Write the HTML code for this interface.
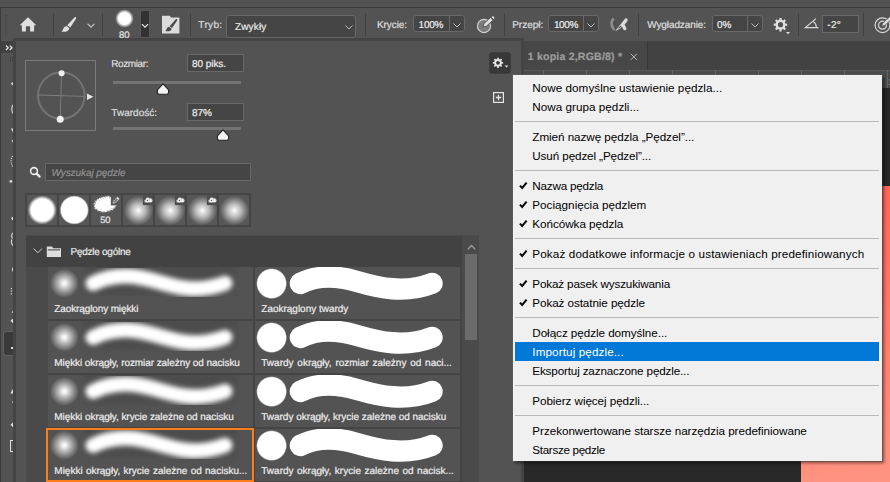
<!DOCTYPE html>
<html><head><meta charset="utf-8"><title>Pędzle</title>
<style>
*{box-sizing:border-box;margin:0;padding:0}
html,body{width:890px;height:482px;overflow:hidden;background:#535353}
body{position:relative;font-family:"Liberation Sans",sans-serif;font-size:11px;color:#dcdcdc}
.a{position:absolute}
.t{position:absolute;white-space:nowrap}
.sep{position:absolute;top:13px;width:1px;height:23px;background:#404040}
.inp{position:absolute;background:#454545;border:1px solid #686868}
</style></head><body>
<div class="a" style="left:0;top:7px;width:890px;height:1px;background:#3b3b3b"></div>
<div class="a" style="left:0;top:8px;width:1px;height:474px;background:#3b3b3b"></div>
<div class="a" style="left:1px;top:41px;width:12px;height:12px;background:#424242"></div>
<svg class="a" style="left:5px;top:45px" width="9" height="6" viewBox="0 0 9 6"><path d="M1 0.6 L3.2 2.8 L1 5 M4.8 0.6 L7 2.8 L4.8 5" fill="none" stroke="#e8e8e8" stroke-width="1.3"/></svg>
<div class="a" style="left:524px;top:41px;width:366px;height:29px;background:#424242"></div>
<div class="a" style="left:524px;top:41px;width:124px;height:29px;background:#474747;border-right:1px solid #383838"></div>
<div class="a" style="left:524px;top:70px;width:366px;height:18px;background:#4b4b4b;border-top:1px solid #585858"></div>
<span class="t" style="left:888.4px;top:77px;font-size:9px;line-height:10px;color:#a8a8a8;text-rendering:geometricPrecision;-webkit-text-stroke:0.22px">1</span>
<div class="a" style="left:543px;top:70px;width:1px;height:18px;background:#646464"></div>
<div class="a" style="left:586px;top:70px;width:1px;height:18px;background:#646464"></div>
<div class="a" style="left:629px;top:70px;width:1px;height:18px;background:#646464"></div>
<div class="a" style="left:672px;top:70px;width:1px;height:18px;background:#646464"></div>
<div class="a" style="left:715px;top:70px;width:1px;height:18px;background:#646464"></div>
<div class="a" style="left:758px;top:70px;width:1px;height:18px;background:#646464"></div>
<div class="a" style="left:801px;top:70px;width:1px;height:18px;background:#646464"></div>
<div class="a" style="left:844px;top:70px;width:1px;height:18px;background:#646464"></div>
<div class="a" style="left:887px;top:70px;width:1px;height:18px;background:#646464"></div>
<div class="a" style="left:524px;top:88px;width:366px;height:394px;background:#282828"></div>
<div class="a" style="left:801px;top:186px;width:89px;height:296px;background:linear-gradient(172deg,#ff6454 0,#ff7c6a 50%,#ff9482 100%)"></div>
<span class="t" style="left:527.8px;top:51px;font-size:10.6px;line-height:12px;color:#9c9c9c;font-weight:bold;text-rendering:geometricPrecision;-webkit-text-stroke:0.22px;letter-spacing:0.174px">1 kopia 2,RGB/8) *</span>
<svg class="a" style="left:629.5px;top:53px" width="8" height="8" viewBox="0 0 8 8"><path d="M0.8 0.8 L6.8 6.8 M6.8 0.8 L0.8 6.8" stroke="#bcbcbc" stroke-width="1" fill="none"/></svg>
<div class="sep" style="left:53px"></div>
<div class="sep" style="left:102px"></div>
<div class="sep" style="left:190px"></div>
<div class="sep" style="left:365px"></div>
<div class="sep" style="left:504px"></div>
<div class="sep" style="left:638px"></div>
<div class="sep" style="left:798px"></div>
<div class="sep" style="left:863px"></div>
<div class="a" style="left:5px;top:15px;width:2px;height:19px;background:repeating-linear-gradient(#474747 0 1px,transparent 1px 2px)"></div>
<svg class="a" style="left:19px;top:16.2px" width="18" height="17" viewBox="0 0 18 17"><path d="M9 1.2 L17.3 9.3 L15.1 9.3 L15.1 15.5 L11.1 15.5 L11.1 10.3 L6.9 10.3 L6.9 15.5 L2.9 15.5 L2.9 9.3 L0.7 9.3 Z" fill="#e0e0e0"/></svg>
<svg class="a" style="left:60px;top:16px" width="18" height="17" viewBox="0 0 18 17"><path d="M14.4 1.4 C15.6 0.6 16.6 1.4 16 2.8 L10.2 11.4 L7.2 9.2 Z" fill="#e0e0e0"/><path d="M6.4 9.9 L9.4 12.2 C9 15 5.4 16.4 1.2 15.6 C3.4 14.4 3 10.6 6.4 9.9 Z" fill="#e0e0e0"/></svg>
<svg class="a" style="left:87px;top:23px" width="8" height="6" viewBox="0 0 8 6"><path d="M0.6 0.8 L4 4.2 L7.4 0.8" fill="none" stroke="#bababa" stroke-width="1.3"/></svg>
<div class="a" style="left:115px;top:9px;width:19px;height:19px;border-radius:50%;background:radial-gradient(circle,#fff 0,#fff 6px,rgba(255,255,255,0) 9.3px)"></div>
<span class="t" style="left:119.0px;top:30px;font-size:9.5px;line-height:11px;color:#e4e4e4;text-rendering:geometricPrecision;-webkit-text-stroke:0.22px;letter-spacing:0.061px">80</span>
<div class="a" style="left:140px;top:10px;width:10px;height:28px;background:#323232;border:1px solid #585858;border-radius:2px"></div>
<svg class="a" style="left:141px;top:22.6px" width="8" height="6" viewBox="0 0 8 6"><path d="M0.9 1.2 L4 4.2 L7.1 1.2" fill="none" stroke="#ececec" stroke-width="1.15"/></svg>
<svg class="a" style="left:162px;top:15px" width="18" height="19" viewBox="0 0 18 19"><path d="M0 0.8 L8 0.8 L8.8 2.6 L17.4 2.6 L17.4 18.4 L0 18.4 Z" fill="#dcdcdc"/><path d="M13.6 4.4 C14.8 3.6 15.8 4.6 15 5.8 L10 13 L7.6 11.2 Z" fill="#4a4a4a"/><path d="M7 11.7 L9.6 13.7 C9.4 16.2 6 16.8 3.2 16 C5 15 4.2 12.4 7 11.7 Z" fill="#4a4a4a"/></svg>
<span class="t" style="left:198.3px;top:20px;font-size:10px;line-height:11px;color:#dcdcdc;text-rendering:geometricPrecision;-webkit-text-stroke:0.22px;letter-spacing:0.356px">Tryb:</span>
<div class="inp" style="left:226px;top:15px;width:130px;height:23px;border-radius:3px"></div>
<span class="t" style="left:235.0px;top:22px;font-size:10px;line-height:11px;color:#e6e6e6;text-rendering:geometricPrecision;-webkit-text-stroke:0.22px;letter-spacing:0.140px">Zwykły</span>
<svg class="a" style="left:345px;top:25px" width="8" height="5" viewBox="0 0 8 5"><path d="M0.5 0.5 L4 4 L7.5 0.5" fill="none" stroke="#bdbdbd" stroke-width="1"/></svg>
<span class="t" style="left:377.0px;top:20px;font-size:10px;line-height:11px;color:#dcdcdc;text-rendering:geometricPrecision;-webkit-text-stroke:0.22px;letter-spacing:-0.080px">Krycie:</span>
<div class="inp" style="left:413px;top:15px;width:52px;height:17px;border-radius:3px"></div>
<div class="a" style="left:449px;top:16px;width:1px;height:15px;background:#6a6a6a"></div>
<span class="t" style="left:418.6px;top:20px;font-size:10px;line-height:11px;color:#ececec;text-rendering:geometricPrecision;-webkit-text-stroke:0.22px;letter-spacing:-0.270px">100%</span>
<svg class="a" style="left:453px;top:23px" width="8" height="5" viewBox="0 0 8 5"><path d="M0.5 0.5 L4 4 L7.5 0.5" fill="none" stroke="#bdbdbd" stroke-width="1"/></svg>
<div class="inp" style="left:548px;top:15px;width:51px;height:17px;border-radius:3px"></div>
<div class="a" style="left:583px;top:16px;width:1px;height:15px;background:#6a6a6a"></div>
<span class="t" style="left:553.9px;top:20px;font-size:10px;line-height:11px;color:#ececec;text-rendering:geometricPrecision;-webkit-text-stroke:0.22px;letter-spacing:-0.345px">100%</span>
<svg class="a" style="left:587px;top:23px" width="8" height="5" viewBox="0 0 8 5"><path d="M0.5 0.5 L4 4 L7.5 0.5" fill="none" stroke="#bdbdbd" stroke-width="1"/></svg>
<div class="inp" style="left:712px;top:15px;width:51px;height:17px;border-radius:3px"></div>
<div class="a" style="left:747px;top:16px;width:1px;height:15px;background:#6a6a6a"></div>
<span class="t" style="left:717.0px;top:20px;font-size:10px;line-height:11px;color:#ececec;text-rendering:geometricPrecision;-webkit-text-stroke:0.22px;letter-spacing:0.023px">0%</span>
<svg class="a" style="left:751px;top:23px" width="8" height="5" viewBox="0 0 8 5"><path d="M0.5 0.5 L4 4 L7.5 0.5" fill="none" stroke="#bdbdbd" stroke-width="1"/></svg>
<svg class="a" style="left:476px;top:15px" width="20" height="20" viewBox="0 0 20 20"><defs><pattern id="hat" width="2" height="2" patternUnits="userSpaceOnUse"><rect width="1" height="1" fill="#bdbdbd"/><rect x="1" y="1" width="1" height="1" fill="#bdbdbd"/></pattern></defs><circle cx="8" cy="11" r="6.6" fill="#7c7c7c" stroke="#d8d8d8" stroke-width="1.1"/><path d="M7 12 L8 8.6 L14.4 2.6 L17 5.2 L10.4 11.2 Z M15 2 L16 1 Q17 0.4 17.8 1.2 L18.6 2 Q19.2 3 18.4 3.8 L17.6 4.6 Z" fill="#e0e0e0" stroke="#505050" stroke-width="0.9"/></svg>
<span class="t" style="left:512.2px;top:20px;font-size:10px;line-height:11px;color:#dcdcdc;text-rendering:geometricPrecision;-webkit-text-stroke:0.22px;letter-spacing:-0.018px">Przepł:</span>
<svg class="a" style="left:609px;top:16px" width="21" height="17" viewBox="0 0 21 17"><path d="M4.6 2.4 Q0.2 8.2 5.2 14" fill="none" stroke="#8e8e8e" stroke-width="2.6"/><path d="M6 15.2 L11.4 8.4 L15.4 3.4 Q16.6 1.8 18 2.6 Q19.4 3.8 18.2 5.4 L15.6 8.6 L17.4 12 Q17.8 13.6 16.4 14.2 Q14.8 14.6 14.2 13.2 L13 10.6 L11.2 12.4 Z" fill="#dcdcdc"/><path d="M8.6 12.8 L11.6 9.6 L12.4 10.6 L10.4 12.2 Z" fill="#555"/></svg>
<span class="t" style="left:647.2px;top:20px;font-size:10px;line-height:11px;color:#dcdcdc;text-rendering:geometricPrecision;-webkit-text-stroke:0.22px;letter-spacing:-0.096px">Wygładzanie:</span>
<svg class="a" style="left:772px;top:16px" width="20" height="20" viewBox="0 0 20 20"><polygon points="15.22,7.64 15.22,9.76 13.39,9.87 12.79,11.33 14.00,12.70 12.50,14.20 11.13,12.99 9.67,13.59 9.56,15.42 7.44,15.42 7.33,13.59 5.87,12.99 4.50,14.20 3.00,12.70 4.21,11.33 3.61,9.87 1.78,9.76 1.78,7.64 3.61,7.53 4.21,6.07 3.00,4.70 4.50,3.20 5.87,4.41 7.33,3.81 7.44,1.98 9.56,1.98 9.67,3.81 11.13,4.41 12.50,3.20 14.00,4.70 12.79,6.07 13.39,7.53" fill="#e0e0e0"/><circle cx="8.50" cy="8.70" r="2.60" fill="#535353"/><path d="M14 16 L18 16 L16 18.2 Z" fill="#e0e0e0"/></svg>
<svg class="a" style="left:804px;top:17px" width="16" height="13" viewBox="0 0 16 13"><path d="M12 1.6 L1.4 10.6 L14.4 10.6" fill="none" stroke="#d8d8d8" stroke-width="1.1"/><path d="M9.2 4.4 Q12.4 6.6 12.4 10.4" fill="none" stroke="#d8d8d8" stroke-width="1.1"/></svg>
<div class="inp" style="left:822px;top:15px;width:37px;height:18px"></div>
<span class="t" style="left:827.3px;top:20px;font-size:10px;line-height:11px;color:#ececec;text-rendering:geometricPrecision;-webkit-text-stroke:0.22px;letter-spacing:0.270px">-2°</span>
<svg class="a" style="left:873px;top:15px" width="17" height="20" viewBox="0 0 17 20"><circle cx="9.5" cy="10.2" r="7.4" fill="none" stroke="#d8d8d8" stroke-width="1.2"/><circle cx="9.5" cy="10.2" r="4" fill="none" stroke="#d8d8d8" stroke-width="1.2"/><path d="M8.6 11.4 L9.8 8.2 L17 1.4 L19 3.6 L12 10.4 Z" fill="#dcdcdc" stroke="#535353" stroke-width="0.8"/></svg>
<div class="a" style="left:13px;top:38px;width:511px;height:444px;background:#535353;border-left:3px solid #444;border-top:3px solid #444;border-right:3px solid #444"></div>
<div class="a" style="left:25px;top:60px;width:71px;height:71px;border:1px solid #7a7a7a"></div>
<svg class="a" style="left:25px;top:60px" width="72" height="72" viewBox="0 0 72 72"><circle cx="36.3" cy="35.6" r="23.3" fill="none" stroke="#747474" stroke-width="2"/><path d="M36.6 13 L35.2 59 M13 35 L59.6 36.4" stroke="#7d7d7d" stroke-width="1" fill="none"/><circle cx="36.6" cy="13.2" r="3" fill="#f0f0f0"/><circle cx="35.2" cy="59.2" r="3.5" fill="#f0f0f0"/><path d="M62 33.6 L68.4 36.8 L62 40 Z" fill="#e6e6e6"/></svg>
<span class="t" style="left:111.3px;top:59px;font-size:10px;line-height:11px;color:#dcdcdc;text-rendering:geometricPrecision;-webkit-text-stroke:0.22px;letter-spacing:-0.402px">Rozmiar:</span>
<span class="t" style="left:111.3px;top:108px;font-size:10px;line-height:11px;color:#dcdcdc;text-rendering:geometricPrecision;-webkit-text-stroke:0.22px;letter-spacing:0.025px">Twardość:</span>
<div class="inp" style="left:187px;top:54px;width:57px;height:18px"></div>
<div class="inp" style="left:187px;top:103px;width:57px;height:18px"></div>
<span class="t" style="left:192.0px;top:59px;font-size:10px;line-height:11px;color:#ececec;text-rendering:geometricPrecision;-webkit-text-stroke:0.22px;letter-spacing:-0.059px">80 piks.</span>
<span class="t" style="left:192.0px;top:108px;font-size:10px;line-height:11px;color:#ececec;text-rendering:geometricPrecision;-webkit-text-stroke:0.22px;letter-spacing:-0.072px">87%</span>
<div class="a" style="left:113px;top:81px;width:128px;height:3px;background:#737373"></div>
<div class="a" style="left:113px;top:127px;width:128px;height:3px;background:#737373"></div>
<svg class="a" style="left:156px;top:83px" width="14" height="13" viewBox="0 0 14 13"><path d="M7 0.9 L12.3 6.6 Q12.6 7 12.6 7.6 L12.6 9.6 Q12.6 11.3 10.8 11.3 L3.2 11.3 Q1.4 11.3 1.4 9.6 L1.4 7.6 Q1.4 7 1.7 6.6 Z" fill="#f4f4f4" stroke="#262626" stroke-width="1.1" stroke-linejoin="round"/></svg>
<svg class="a" style="left:216px;top:129px" width="14" height="13" viewBox="0 0 14 13"><path d="M7 0.9 L12.3 6.6 Q12.6 7 12.6 7.6 L12.6 9.6 Q12.6 11.3 10.8 11.3 L3.2 11.3 Q1.4 11.3 1.4 9.6 L1.4 7.6 Q1.4 7 1.7 6.6 Z" fill="#f4f4f4" stroke="#262626" stroke-width="1.1" stroke-linejoin="round"/></svg>
<div class="a" style="left:489px;top:52px;width:22px;height:22px;background:#383838;border:1px solid #3e3e3e;border-radius:3px"></div>
<svg class="a" style="left:491px;top:56.4px" width="20" height="16" viewBox="0 0 20 16"><polygon points="12.14,5.99 12.14,7.61 10.74,7.70 10.28,8.81 11.21,9.86 10.06,11.01 9.01,10.08 7.90,10.54 7.81,11.94 6.19,11.94 6.10,10.54 4.99,10.08 3.94,11.01 2.79,9.86 3.72,8.81 3.26,7.70 1.86,7.61 1.86,5.99 3.26,5.90 3.72,4.79 2.79,3.74 3.94,2.59 4.99,3.52 6.10,3.06 6.19,1.66 7.81,1.66 7.90,3.06 9.01,3.52 10.06,2.59 11.21,3.74 10.28,4.79 10.74,5.90" fill="#e6e6e6"/><circle cx="7.00" cy="6.80" r="1.90" fill="#383838"/><path d="M13.6 9.4 L17.4 9.4 L15.5 11.4 Z" fill="#e6e6e6"/></svg>
<svg class="a" style="left:493px;top:92px" width="12" height="12" viewBox="0 0 12 12"><rect x="0.6" y="0.6" width="9.8" height="9.8" fill="none" stroke="#e6e6e6" stroke-width="1.2"/><path d="M5.5 2.8 V8.2 M2.8 5.5 H8.2" stroke="#e6e6e6" stroke-width="1.3"/></svg>
<svg class="a" style="left:29px;top:166px" width="13" height="13" viewBox="0 0 13 13"><circle cx="5" cy="5" r="3.4" fill="none" stroke="#ececec" stroke-width="1.6"/><path d="M7.6 7.6 L10.6 10.6" stroke="#ececec" stroke-width="2.2" stroke-linecap="round"/></svg>
<div class="inp" style="left:45px;top:163px;width:206px;height:18px"></div>
<span class="t" style="left:51.4px;top:168px;font-size:10px;line-height:11px;color:#8f8f8f;font-style:italic;text-rendering:geometricPrecision;-webkit-text-stroke:0.22px;letter-spacing:-0.069px">Wyszukaj pędzle</span>
<div class="a" style="left:25px;top:193px;width:226px;height:34px;background:#464646"></div>
<div class="a" style="left:27px;top:195px;width:30px;height:30px;background:#575757;overflow:hidden">
<div class="a" style="left:0;top:0;width:30px;height:30px;background:radial-gradient(circle at 15.2px 15px,#fff 0,#fff 11px,rgba(255,255,255,0) 14.6px)"></div>
</div>
<div class="a" style="left:59px;top:195px;width:30px;height:30px;background:#575757;overflow:hidden">
<div class="a" style="left:0;top:0;width:30px;height:30px;background:radial-gradient(circle at 15.3px 15px,#fff 0,#fff 13px,rgba(255,255,255,0) 14.6px)"></div>
</div>
<div class="a" style="left:91px;top:195px;width:30px;height:30px;background:#575757;overflow:hidden">
<svg class="a" style="left:0;top:0" width="30" height="30" viewBox="0 0 30 30"><defs><filter id="rg" x="-20%" y="-20%" width="140%" height="140%" color-interpolation-filters="sRGB"><feGaussianBlur in="SourceGraphic" stdDeviation="1.5" result="b"/><feTurbulence type="fractalNoise" baseFrequency="0.9" numOctaves="2" seed="7" result="n"/><feColorMatrix in="n" type="matrix" values="0 0 0 0 1  0 0 0 0 1  0 0 0 0 1  0 0 0 3 -1" result="na"/><feComposite in="b" in2="na" operator="arithmetic" k1="1.5" k2="1.7" k3="0" k4="-0.75"/></filter></defs><ellipse cx="14.3" cy="9.2" rx="11.6" ry="7.8" transform="rotate(-10 14.3 9.2)" fill="#fff" filter="url(#rg)"/><path d="M19.8 0 H30 V10.4 H19.8 Z" fill="#575757"/><path d="M22 8.2 L22.8 5.8 L26.2 2.4 L28 4.2 L24.6 7.6 Z" fill="#7a7a7a" stroke="#dcdcdc" stroke-width="0.9" stroke-dasharray="1.6 0.6"/><path d="M25.4 3.2 L26.6 2 L28.4 3.8 L27.2 5 Z" fill="#e0e0e0"/></svg>
</div>
<div class="a" style="left:123px;top:195px;width:30px;height:30px;background:#575757;overflow:hidden">
<div class="a" style="left:0;top:0;width:30px;height:30px;background:radial-gradient(circle at 15.4px 15.6px,#fff 0,rgba(255,255,255,.9) 1.5px,rgba(255,255,255,.56) 7px,rgba(255,255,255,.25) 11px,rgba(255,255,255,0) 14.8px)"></div>
<div class="a" style="left:20px;top:0;width:10px;height:10px;background:#4d4d4d"></div>
<svg class="a" style="left:21px;top:2px" width="9" height="6" viewBox="0 0 9 6"><path d="M1.8 5.6 A1.6 1.6 0 0 1 1.6 2.5 A2.2 2.2 0 0 1 5.6 1.4 A2.1 2.1 0 0 1 7 5.6 Z" fill="#e8e8e8"/><path d="M2.6 4 L4.4 4 L3.5 2.8 Z" fill="#4d4d4d"/></svg>
</div>
<div class="a" style="left:155px;top:195px;width:30px;height:30px;background:#575757;overflow:hidden">
<div class="a" style="left:0;top:0;width:30px;height:30px;background:radial-gradient(circle at 15.4px 15.6px,#fff 0,rgba(255,255,255,.9) 1.5px,rgba(255,255,255,.56) 7px,rgba(255,255,255,.25) 11px,rgba(255,255,255,0) 14.8px)"></div>
<div class="a" style="left:20px;top:0;width:10px;height:10px;background:#4d4d4d"></div>
<svg class="a" style="left:21px;top:2px" width="9" height="6" viewBox="0 0 9 6"><path d="M1.8 5.6 A1.6 1.6 0 0 1 1.6 2.5 A2.2 2.2 0 0 1 5.6 1.4 A2.1 2.1 0 0 1 7 5.6 Z" fill="#e8e8e8"/><path d="M2.6 4 L4.4 4 L3.5 2.8 Z" fill="#4d4d4d"/></svg>
</div>
<div class="a" style="left:187px;top:195px;width:30px;height:30px;background:#575757;overflow:hidden">
<div class="a" style="left:0;top:0;width:30px;height:30px;background:radial-gradient(circle at 15.4px 15.6px,#fff 0,rgba(255,255,255,.9) 1.5px,rgba(255,255,255,.56) 7px,rgba(255,255,255,.25) 11px,rgba(255,255,255,0) 14.8px)"></div>
<div class="a" style="left:20px;top:0;width:10px;height:10px;background:#4d4d4d"></div>
<svg class="a" style="left:21px;top:2px" width="9" height="6" viewBox="0 0 9 6"><path d="M1.8 5.6 A1.6 1.6 0 0 1 1.6 2.5 A2.2 2.2 0 0 1 5.6 1.4 A2.1 2.1 0 0 1 7 5.6 Z" fill="#e8e8e8"/><path d="M2.6 4 L4.4 4 L3.5 2.8 Z" fill="#4d4d4d"/></svg>
</div>
<div class="a" style="left:219px;top:195px;width:30px;height:30px;background:#575757;overflow:hidden">
<div class="a" style="left:0;top:0;width:30px;height:30px;background:radial-gradient(circle at 15.4px 15.6px,#fff 0,rgba(255,255,255,.9) 1.5px,rgba(255,255,255,.56) 7px,rgba(255,255,255,.25) 11px,rgba(255,255,255,0) 14.8px)"></div>
</div>
<span class="t" style="left:100.3px;top:215px;font-size:9.3px;line-height:10px;color:#e4e4e4;text-rendering:geometricPrecision;-webkit-text-stroke:0.22px;letter-spacing:-0.122px">50</span>
<div class="a" style="left:26px;top:235px;width:453px;height:247px;background:#4a4a4a"></div>
<div class="a" style="left:26px;top:236px;width:436px;height:31px;background:#424242"></div>
<div class="a" style="left:26px;top:235px;width:453px;height:1px;background:#4b4b4b"></div>
<div class="a" style="left:26px;top:267px;width:22px;height:215px;background:#4a4a4a"></div>
<div class="a" style="left:48px;top:267px;width:414px;height:215px;background:#444"></div>
<svg class="a" style="left:33px;top:248px" width="10" height="6" viewBox="0 0 10 6"><path d="M0.6 0.6 L4.8 4.8 L9 0.6" fill="none" stroke="#cfcfcf" stroke-width="1"/></svg>
<svg class="a" style="left:46px;top:246px" width="16" height="12" viewBox="0 0 16 12"><path d="M0.8 0.4 L6 0.4 L7.2 2.2 L15 2.2 L15 11 L0.8 11 Z" fill="#dcdcdc"/><rect x="1.8" y="3.4" width="12.2" height="1" fill="#424242"/></svg>
<span class="t" style="left:70.5px;top:247px;font-size:10px;line-height:11px;color:#e6e6e6;text-rendering:geometricPrecision;-webkit-text-stroke:0.22px;letter-spacing:-0.261px">Pędzle ogólne</span>
<svg class="a" style="left:467px;top:244px" width="9" height="6" viewBox="0 0 9 6"><path d="M0.8 5.2 L4.5 1.5 L8.2 5.2" fill="none" stroke="#9c9c9c" stroke-width="1.4"/></svg>
<div class="a" style="left:465px;top:254px;width:12px;height:86px;background:#6b6b6b"></div>
<svg width="0" height="0" class="a"><defs><filter id="bl" x="-20%" y="-60%" width="140%" height="220%"><feGaussianBlur stdDeviation="2.6"/></filter></defs></svg>
<div class="a" style="left:48px;top:267px;width:205px;height:52px;background:#535353;overflow:hidden">
<div class="a" style="left:2px;top:2px;width:30px;height:30px;background:radial-gradient(circle at 14.4px 14.3px,#fff 0,rgba(255,255,255,.92) 1.8px,rgba(255,255,255,.6) 6px,rgba(255,255,255,.27) 10.5px,rgba(255,255,255,0) 14.6px)"></div>
<svg class="a" style="left:30px;top:0" width="175" height="40" viewBox="0 0 175 40"><rect x="6" y="-4" width="152" height="32" fill="#464646" opacity=".55" filter="url(#bl)"/><path d="M15 16.4 C27 10.5 40 8.6 52 9.2 C72 10 92 20.5 112 21.6 C126 22.4 138 19.5 147 16.2" fill="none" stroke="#fff" stroke-width="15" stroke-linecap="round" filter="url(#bl)"/></svg>
</div>
<div class="a" style="left:255px;top:267px;width:205px;height:52px;background:#535353;overflow:hidden">
<div class="a" style="left:1px;top:1px;width:32px;height:32px;background:radial-gradient(circle at 15.6px 15.6px,#fff 0,#fff 14px,rgba(255,255,255,0) 15.4px)"></div>
<svg class="a" style="left:30px;top:0" width="175" height="40" viewBox="0 0 175 40"><path d="M15.4 16.4 C30 9 50 8 72 14.4 S 120 27 147 16.4" fill="none" stroke="#fff" stroke-width="21.4" stroke-linecap="round"/></svg>
</div>
<span class="t" style="left:54.3px;top:304px;font-size:10px;line-height:11px;color:#ececec;text-rendering:geometricPrecision;-webkit-text-stroke:0.22px;letter-spacing:-0.120px">Zaokrąglony miękki</span>
<span class="t" style="left:261.3px;top:304px;font-size:10px;line-height:11px;color:#ececec;text-rendering:geometricPrecision;-webkit-text-stroke:0.22px;letter-spacing:-0.015px">Zaokrąglony twardy</span>
<div class="a" style="left:48px;top:321px;width:205px;height:52px;background:#535353;overflow:hidden">
<div class="a" style="left:2px;top:2px;width:30px;height:30px;background:radial-gradient(circle at 14.4px 14.3px,#fff 0,rgba(255,255,255,.92) 1.8px,rgba(255,255,255,.6) 6px,rgba(255,255,255,.27) 10.5px,rgba(255,255,255,0) 14.6px)"></div>
<svg class="a" style="left:30px;top:0" width="175" height="40" viewBox="0 0 175 40"><rect x="6" y="-4" width="152" height="32" fill="#464646" opacity=".55" filter="url(#bl)"/><path d="M15 16.4 C27 10.5 40 8.6 52 9.2 C72 10 92 20.5 112 21.6 C126 22.4 138 19.5 147 16.2" fill="none" stroke="#fff" stroke-width="15" stroke-linecap="round" filter="url(#bl)"/></svg>
</div>
<div class="a" style="left:255px;top:321px;width:205px;height:52px;background:#535353;overflow:hidden">
<div class="a" style="left:1px;top:1px;width:32px;height:32px;background:radial-gradient(circle at 15.6px 15.6px,#fff 0,#fff 14px,rgba(255,255,255,0) 15.4px)"></div>
<svg class="a" style="left:30px;top:0" width="175" height="40" viewBox="0 0 175 40"><path d="M15.4 16.4 C30 9 50 8 72 14.4 S 120 27 147 16.4" fill="none" stroke="#fff" stroke-width="21.4" stroke-linecap="round"/></svg>
</div>
<span class="t" style="left:54.3px;top:358px;font-size:10px;line-height:11px;color:#ececec;text-rendering:geometricPrecision;-webkit-text-stroke:0.22px;letter-spacing:-0.078px">Miękki okrągły, rozmiar zależny od nacisku</span>
<span class="t" style="left:261.3px;top:358px;font-size:10px;line-height:11px;color:#ececec;text-rendering:geometricPrecision;-webkit-text-stroke:0.22px;word-spacing:1.009px">Twardy okrągły, rozmiar zależny od naci...</span>
<div class="a" style="left:48px;top:375px;width:205px;height:52px;background:#535353;overflow:hidden">
<div class="a" style="left:2px;top:2px;width:30px;height:30px;background:radial-gradient(circle at 14.4px 14.3px,#fff 0,rgba(255,255,255,.92) 1.8px,rgba(255,255,255,.6) 6px,rgba(255,255,255,.27) 10.5px,rgba(255,255,255,0) 14.6px)"></div>
<svg class="a" style="left:30px;top:0" width="175" height="40" viewBox="0 0 175 40"><rect x="6" y="-4" width="152" height="32" fill="#464646" opacity=".55" filter="url(#bl)"/><path d="M15 16.4 C27 10.5 40 8.6 52 9.2 C72 10 92 20.5 112 21.6 C126 22.4 138 19.5 147 16.2" fill="none" stroke="#fff" stroke-width="15" stroke-linecap="round" filter="url(#bl)"/></svg>
</div>
<div class="a" style="left:255px;top:375px;width:205px;height:52px;background:#535353;overflow:hidden">
<div class="a" style="left:1px;top:1px;width:32px;height:32px;background:radial-gradient(circle at 15.6px 15.6px,#fff 0,#fff 14px,rgba(255,255,255,0) 15.4px)"></div>
<svg class="a" style="left:30px;top:0" width="175" height="40" viewBox="0 0 175 40"><path d="M15.4 16.4 C30 9 50 8 72 14.4 S 120 27 147 16.4" fill="none" stroke="#fff" stroke-width="21.4" stroke-linecap="round"/></svg>
</div>
<span class="t" style="left:54.3px;top:412px;font-size:10px;line-height:11px;color:#ececec;text-rendering:geometricPrecision;-webkit-text-stroke:0.22px;letter-spacing:-0.064px">Miękki okrągły, krycie zależne od nacisku</span>
<span class="t" style="left:261.3px;top:412px;font-size:10px;line-height:11px;color:#ececec;text-rendering:geometricPrecision;-webkit-text-stroke:0.22px;letter-spacing:-0.025px">Twardy okrągły, krycie zależne od nacisku</span>
<div class="a" style="left:48px;top:429px;width:205px;height:52px;background:#535353;overflow:hidden">
<div class="a" style="left:2px;top:2px;width:30px;height:30px;background:radial-gradient(circle at 14.4px 14.3px,#fff 0,rgba(255,255,255,.92) 1.8px,rgba(255,255,255,.6) 6px,rgba(255,255,255,.27) 10.5px,rgba(255,255,255,0) 14.6px)"></div>
<svg class="a" style="left:30px;top:0" width="175" height="40" viewBox="0 0 175 40"><rect x="6" y="-4" width="152" height="32" fill="#464646" opacity=".55" filter="url(#bl)"/><path d="M15 16.4 C27 10.5 40 8.6 52 9.2 C72 10 92 20.5 112 21.6 C126 22.4 138 19.5 147 16.2" fill="none" stroke="#fff" stroke-width="15" stroke-linecap="round" filter="url(#bl)"/></svg>
</div>
<div class="a" style="left:255px;top:429px;width:205px;height:52px;background:#535353;overflow:hidden">
<div class="a" style="left:1px;top:1px;width:32px;height:32px;background:radial-gradient(circle at 15.6px 15.6px,#fff 0,#fff 14px,rgba(255,255,255,0) 15.4px)"></div>
<svg class="a" style="left:30px;top:0" width="175" height="40" viewBox="0 0 175 40"><path d="M15.4 16.4 C30 9 50 8 72 14.4 S 120 27 147 16.4" fill="none" stroke="#fff" stroke-width="21.4" stroke-linecap="round"/></svg>
</div>
<span class="t" style="left:54.3px;top:466px;font-size:10px;line-height:11px;color:#ececec;text-rendering:geometricPrecision;-webkit-text-stroke:0.22px;word-spacing:0.509px">Miękki okrągły, krycie zależne od nacisku...</span>
<span class="t" style="left:261.3px;top:466px;font-size:10px;line-height:11px;color:#ececec;text-rendering:geometricPrecision;-webkit-text-stroke:0.22px;word-spacing:0.744px">Twardy okrągły, krycie zależne od nacisk...</span>
<div class="a" style="left:46px;top:428px;width:208px;height:54px;border:2px solid #fb7d1b"></div>
<svg class="a" style="left:0;top:53px" width="13" height="429" viewBox="0 53 13 429"><g fill="#e2e2e2" stroke="none"><path d="M10 57h1v5h-1zM12 57h1v5h-1z" fill="#444"/><path d="M13 82 L10.9 83.7 L13 85.5Z"/><path d="M13 104.8 Q10.6 109 13 113.5" fill="none" stroke="#d8d8d8" stroke-width="1.1"/><path d="M11 128.6 H13 V132.4Z"/><path d="M13 139.6 L11.6 141 L13 142.2Z"/><path d="M12.6 156 Q9.6 161 12.6 166.5" fill="none" stroke="#d8d8d8" stroke-width="1.1" stroke-dasharray="1 1"/><rect x="9.6" y="180.3" width="2.6" height="2.2"/><path d="M13 216.4 L11 218.6 L13 220.6Z"/><path d="M13 232.8 Q10.6 235 12.4 238.4 M12 239.6 Q10.4 242.6 13 245.6" fill="none" stroke="#d8d8d8" stroke-width="1.1"/><path d="M13 267 Q11 269.5 13 272Z"/><path d="M11.4 288 V295" fill="none" stroke="#cfcfcf" stroke-width="1.2" stroke-dasharray="1.2 1.4"/><rect x="12" y="311.4" width="1" height="1.4"/><path d="M13 318.4 L10.6 320.8 L13 323.2Z"/><path d="M13 388.8 L10.4 393.6 L13 393.6Z"/><rect x="12" y="401.6" width="1" height="1"/><path d="M13 422.4 L10.6 424.8 L13 427.2Z"/></g></svg>
<div class="a" style="left:3px;top:331px;width:10px;height:25px;background:#3a3a3a;border:1px solid #606060;border-right:none;border-radius:3px 0 0 3px"></div>
<div class="a" style="left:11px;top:347px;width:2px;height:2px;background:#e0e0e0"></div>
<div class="a" style="left:10px;top:440px;width:3px;height:12px;border:1px solid #e0e0e0;border-right:none"></div>
<div class="a" style="left:513px;top:75px;width:369px;height:386px;background:#f0f0f0;box-shadow:2px 2px 3px rgba(0,0,0,.5),0 0 0 1px rgba(120,120,120,.3)"></div>
<div class="a" style="left:515px;top:342px;width:364px;height:19px;background:#0078d7"></div>
<span class="t" style="left:532.3px;top:81px;font-size:11.7px;line-height:13px;color:#000;;letter-spacing:0.028px">Nowe domyślne ustawienie pędzla...</span>
<span class="t" style="left:532.3px;top:100px;font-size:11.7px;line-height:13px;color:#000;;letter-spacing:0.023px">Nowa grupa pędzli...</span>
<span class="t" style="left:532.3px;top:130px;font-size:11.7px;line-height:13px;color:#000;;letter-spacing:-0.057px">Zmień nazwę pędzla „Pędzel”...</span>
<span class="t" style="left:532.3px;top:149px;font-size:11.7px;line-height:13px;color:#000;;letter-spacing:-0.117px">Usuń pędzel „Pędzel”...</span>
<span class="t" style="left:532.3px;top:179px;font-size:11.7px;line-height:13px;color:#000;;letter-spacing:-0.218px">Nazwa pędzla</span>
<svg class="a" style="left:518.6px;top:180.6px" width="9" height="9" viewBox="0 0 9 9"><path d="M0.9 4.6 L3.2 7 L7.6 1.6" fill="none" stroke="#0a0a0a" stroke-width="2"/></svg>
<span class="t" style="left:532.3px;top:198px;font-size:11.7px;line-height:13px;color:#000;;letter-spacing:0.015px">Pociągnięcia pędzlem</span>
<svg class="a" style="left:518.6px;top:199.6px" width="9" height="9" viewBox="0 0 9 9"><path d="M0.9 4.6 L3.2 7 L7.6 1.6" fill="none" stroke="#0a0a0a" stroke-width="2"/></svg>
<span class="t" style="left:532.3px;top:217px;font-size:11.7px;line-height:13px;color:#000;;letter-spacing:-0.042px">Końcówka pędzla</span>
<svg class="a" style="left:518.6px;top:218.6px" width="9" height="9" viewBox="0 0 9 9"><path d="M0.9 4.6 L3.2 7 L7.6 1.6" fill="none" stroke="#0a0a0a" stroke-width="2"/></svg>
<span class="t" style="left:532.3px;top:247px;font-size:11.7px;line-height:13px;color:#000;;letter-spacing:0.134px">Pokaż dodatkowe informacje o ustawieniach predefiniowanych</span>
<svg class="a" style="left:518.6px;top:248.6px" width="9" height="9" viewBox="0 0 9 9"><path d="M0.9 4.6 L3.2 7 L7.6 1.6" fill="none" stroke="#0a0a0a" stroke-width="2"/></svg>
<span class="t" style="left:532.3px;top:277px;font-size:11.7px;line-height:13px;color:#000;;letter-spacing:-0.164px">Pokaż pasek wyszukiwania</span>
<svg class="a" style="left:518.6px;top:278.6px" width="9" height="9" viewBox="0 0 9 9"><path d="M0.9 4.6 L3.2 7 L7.6 1.6" fill="none" stroke="#0a0a0a" stroke-width="2"/></svg>
<span class="t" style="left:532.3px;top:296px;font-size:11.7px;line-height:13px;color:#000;;letter-spacing:-0.084px">Pokaż ostatnie pędzle</span>
<svg class="a" style="left:518.6px;top:297.6px" width="9" height="9" viewBox="0 0 9 9"><path d="M0.9 4.6 L3.2 7 L7.6 1.6" fill="none" stroke="#0a0a0a" stroke-width="2"/></svg>
<span class="t" style="left:532.3px;top:326px;font-size:11.7px;line-height:13px;color:#000;;letter-spacing:-0.057px">Dołącz pędzle domyślne...</span>
<span class="t" style="left:532.3px;top:345px;font-size:11.7px;line-height:13px;color:#fff;;letter-spacing:0.102px">Importuj pędzle...</span>
<span class="t" style="left:532.3px;top:364px;font-size:11.7px;line-height:13px;color:#000;;letter-spacing:-0.159px">Eksportuj zaznaczone pędzle...</span>
<span class="t" style="left:532.3px;top:394px;font-size:11.7px;line-height:13px;color:#000;;letter-spacing:-0.079px">Pobierz więcej pędzli...</span>
<span class="t" style="left:532.3px;top:424px;font-size:11.7px;line-height:13px;color:#000;;letter-spacing:-0.046px">Przekonwertowane starsze narzędzia predefiniowane</span>
<span class="t" style="left:532.3px;top:443px;font-size:11.7px;line-height:13px;color:#000;;letter-spacing:-0.337px">Starsze pędzle</span>
<div class="a" style="left:515px;top:121px;width:364px;height:1px;background:#b9b9b9"></div>
<div class="a" style="left:515px;top:170px;width:364px;height:1px;background:#b9b9b9"></div>
<div class="a" style="left:515px;top:238px;width:364px;height:1px;background:#b9b9b9"></div>
<div class="a" style="left:515px;top:268px;width:364px;height:1px;background:#b9b9b9"></div>
<div class="a" style="left:515px;top:317px;width:364px;height:1px;background:#b9b9b9"></div>
<div class="a" style="left:515px;top:385px;width:364px;height:1px;background:#b9b9b9"></div>
<div class="a" style="left:515px;top:415px;width:364px;height:1px;background:#b9b9b9"></div>
</body></html>
